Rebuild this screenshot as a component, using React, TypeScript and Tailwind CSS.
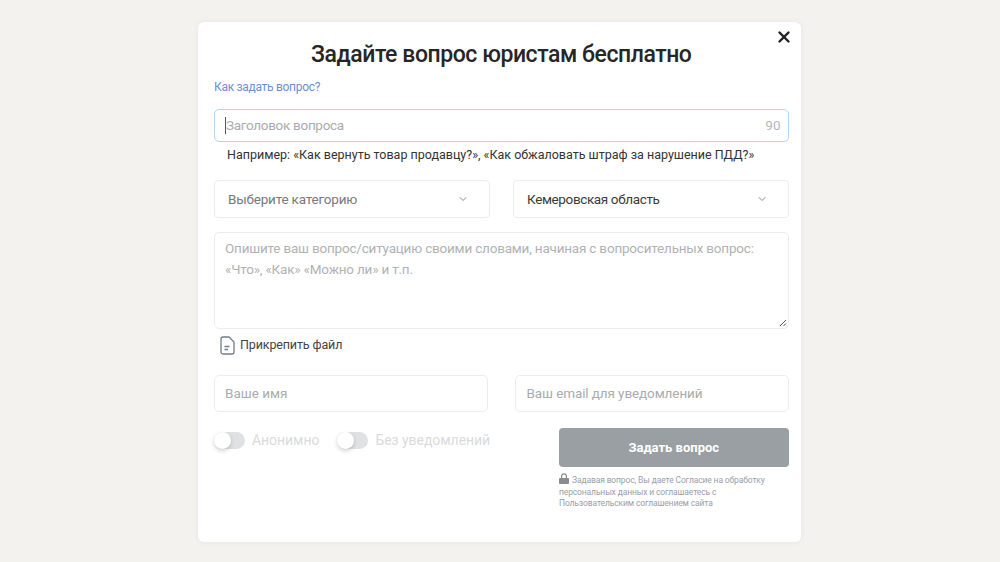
import { ChevronDown, X } from 'lucide-react'

const font = { fontFamily: '"Roboto", "Liberation Sans", sans-serif' }

function Toggle({ label }: { label: string }) {
  return (
    <div className="flex items-center gap-[7px]">
      <div className="relative h-[17px] w-[31px] rounded-full bg-[#dfe1e2]">
        <div className="absolute left-0 top-0 h-[17px] w-[17px] rounded-full bg-white shadow-[0_2px_4px_rgba(0,0,0,0.18)]" />
      </div>
      <span className="text-[14px] leading-[17px] tracking-[-0.05px] text-[#d9dbdc]">{label}</span>
    </div>
  )
}

export default function App() {
  return (
    <div style={font} className="flex h-screen justify-center overflow-hidden bg-[#f4f2ee] pr-[1px] pt-[22px]">
      <div className="relative h-[520px] w-[603px] rounded-[6px] bg-white pl-4 pr-[12.5px] shadow-[0_0_6px_rgba(0,0,0,0.06)]">
        <button className="absolute right-[8px] top-[6px] text-[#222]">
          <X size={18} strokeWidth={3.2} />
        </button>

        <h1 className="pt-[18px] text-center text-[23px] font-medium leading-[30px] tracking-[-0.44px] text-[#262626]">
          Задайте вопрос юристам бесплатно
        </h1>

        <a className="mt-[8px] block text-[12px] leading-[18px] tracking-[-0.3px] text-[#6b8fd9]">Как задать вопрос?</a>

        {/* заголовок */}
        <div className="mt-[13px] flex h-[33px] items-center justify-between rounded-[5px] border border-[#b5d4f5] pl-[10px] pr-[7px]">
          <span className="border-l border-[#555] text-[13.5px] leading-[17px] tracking-[-0.3px] text-[#a9acae]">Заголовок вопроса</span>
          <span className="text-[13.5px] text-[#b4b6b8]">90</span>
        </div>
        <p className="mt-[4px] pl-[13px] text-[12.5px] leading-[18px] text-[#333]">
          Например: «Как вернуть товар продавцу?», «Как обжаловать штраф за нарушение ПДД?»
        </p>

        {/* селекты */}
        <div className="mt-[16px] flex justify-between">
          <div className="flex h-[38px] w-[276px] items-center justify-between rounded-[4px] border border-[#ebecec] pl-[13px] pr-[20px]">
            <span className="text-[13.5px] tracking-[-0.2px] text-[#77797b]">Выберите категорию</span>
            <ChevronDown size={12} className="text-[#8a8c8e]" />
          </div>
          <div className="flex h-[38px] w-[275.5px] items-center justify-between rounded-[4px] border border-[#ebecec] pl-[13px] pr-[20px]">
            <span className="text-[13.5px] tracking-[-0.37px] text-[#3a3a3a]">Кемеровская область</span>
            <ChevronDown size={12} className="text-[#8a8c8e]" />
          </div>
        </div>

        {/* описание */}
        <div className="relative mt-[14px] h-[97px] rounded-[5px] border border-[#ebecec] px-[10px] pt-[5px] text-[13.5px] leading-[21px] tracking-[-0.2px] text-[#b0b2b4]">
          <p className="whitespace-nowrap">Опишите ваш вопрос/ситуацию своими словами, начиная с вопросительных вопрос:</p>
          <p>«Что», «Как» «Можно ли» и т.п.</p>
          <svg className="absolute bottom-[1px] right-[1px]" width="8" height="8" viewBox="0 0 8 8" stroke="#555" strokeWidth="1">
            <path d="M1 7 7 1M4.5 7 7 4.5" />
          </svg>
        </div>

        <div className="mt-[7px] flex items-center gap-[5px] pl-[6px]">
          <svg width="15" height="19" viewBox="0 0 15 19" fill="none" stroke="#6f7d8c" strokeWidth="1.3">
            <path d="M3 1h6l5 5v10a2 2 0 0 1-2 2H3a2 2 0 0 1-2-2V3a2 2 0 0 1 2-2Z" />
            <path d="M4.5 10.5h5M4.5 13.5h3.5" />
          </svg>
          <span className="text-[12.5px] tracking-[-0.13px] text-[#444]">Прикрепить файл</span>
        </div>

        {/* имя и email */}
        <div className="mt-[20px] flex justify-between">
          <div className="flex h-[37px] w-[274px] items-center rounded-[5px] border border-[#ebecec] pl-[10px] text-[13.5px] text-[#a9acae]">
            Ваше имя
          </div>
          <div className="flex h-[37px] w-[274px] items-center rounded-[5px] border border-[#ebecec] pl-[11px] text-[13.5px] tracking-[-0.1px] text-[#a9acae]">
            Ваш email для уведомлений
          </div>
        </div>

        <div className="mt-[16px] flex items-start justify-between">
          <div className="flex gap-[18px] pt-[4px]">
            <Toggle label="Анонимно" />
            <Toggle label="Без уведомлений" />
          </div>
          <div className="w-[229.5px]">
            <button className="h-[39px] w-full rounded-[4px] bg-[#9a9fa4] text-[13px] font-bold text-white">Задать вопрос</button>
            <p className="mt-[6px] text-[8.5px] leading-[11.5px] tracking-[-0.13px] text-[#9a9ea8]">
              <svg className="mr-[3px] inline-block align-[-1px]" width="10" height="11" viewBox="0 0 10 11" fill="#8a8c8e">
                <path d="M1 5h1V3.2a3 3 0 0 1 6 0V5h1a1 1 0 0 1 1 1v4a1 1 0 0 1-1 1H1a1 1 0 0 1-1-1V6a1 1 0 0 1 1-1Zm2.2 0h3.6V3.2a1.8 1.8 0 0 0-3.6 0V5Z" />
              </svg>
              Задавая вопрос, Вы даете Согласие на обработку
              <br />
              персональных данных и соглашаетесь с
              <br />
              Пользовательским соглашением сайта
            </p>
          </div>
        </div>
      </div>
    </div>
  )
}
